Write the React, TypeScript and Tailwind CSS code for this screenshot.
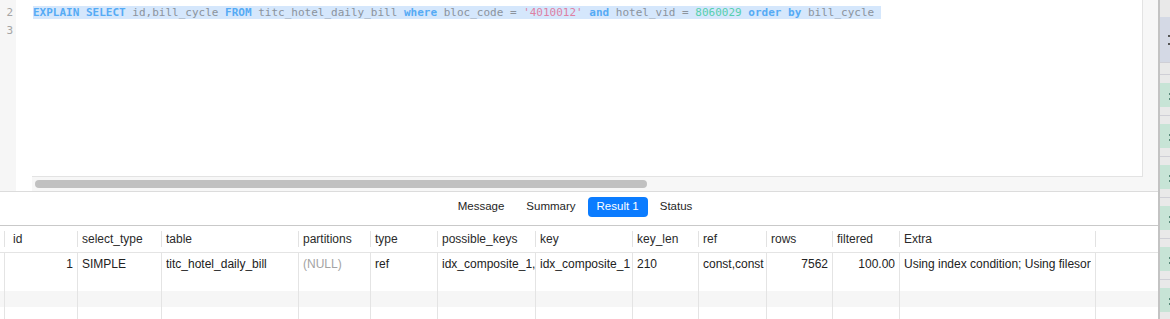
import React from 'react';

const MONO = { fontFamily: '"DejaVu Sans Mono", monospace' };

type Tok = { t: string; c: 'kw' | 'id' | 'str' | 'num' };

const sql: Tok[] = [
  { t: 'EXPLAIN', c: 'kw' },
  { t: ' ', c: 'id' },
  { t: 'SELECT', c: 'kw' },
  { t: ' id,bill_cycle ', c: 'id' },
  { t: 'FROM', c: 'kw' },
  { t: ' titc_hotel_daily_bill ', c: 'id' },
  { t: 'where', c: 'kw' },
  { t: ' bloc_code = ', c: 'id' },
  { t: "'4010012'", c: 'str' },
  { t: ' ', c: 'id' },
  { t: 'and', c: 'kw' },
  { t: ' hotel_vid = ', c: 'id' },
  { t: '8060029', c: 'num' },
  { t: ' ', c: 'id' },
  { t: 'order', c: 'kw' },
  { t: ' ', c: 'id' },
  { t: 'by', c: 'kw' },
  { t: ' bill_cycle ', c: 'id' },
];

const tokClass = {
  kw: 'text-[#55abf5] font-bold',
  id: 'text-[#8b939d]',
  str: 'text-[#de80a4]',
  num: 'text-[#56cfae]',
};

const columns: { name: string; right?: boolean }[] = [
  { name: 'id', right: true },
  { name: 'select_type' },
  { name: 'table' },
  { name: 'partitions' },
  { name: 'type' },
  { name: 'possible_keys' },
  { name: 'key' },
  { name: 'key_len' },
  { name: 'ref' },
  { name: 'rows', right: true },
  { name: 'filtered', right: true },
  { name: 'Extra' },
];

const row = [
  '1',
  'SIMPLE',
  'titc_hotel_daily_bill',
  '(NULL)',
  'ref',
  'idx_composite_1,idx_composite_2',
  'idx_composite_1',
  '210',
  'const,const',
  '7562',
  '100.00',
  'Using index condition; Using filesort',
];

const grid =
  'grid grid-cols-[4px_73px_84px_137px_72px_67px_98px_97px_66px_68px_66px_67px_196px_1fr]';

function Strip() {
  const blocks = [0, 1, 2, 3, 4, 5];
  return (
    <div className="w-[12px] shrink-0 border-l-2 border-[#c3c3c3] bg-[#e9e9e9] flex flex-col">
      <div className="h-[17px] shrink-0" />
      <div className="h-[45px] shrink-0 bg-[#d4d9e5] relative">
        <div className="absolute right-0 top-[18px] w-[2px] h-[2px] bg-[#555]" />
        <div className="absolute right-0 top-[26px] w-[2px] h-[2px] bg-[#555]" />
      </div>
      <div className="h-[12px] shrink-0 border-t border-[#cfcfd6]" />
      {blocks.map((b) => (
        <div key={b} className="h-[41px] shrink-0 border-t border-[#cfcfd6] flex flex-col">
          <div className="h-[8px] shrink-0" />
          <div className="h-[24px] shrink-0 bg-[#c7e4d6] relative">
            <div className="absolute right-0 top-[10px] w-[1px] h-[2px] bg-[#5a8a7a]" />
            <div className="absolute right-0 top-[15px] w-[1px] h-[2px] bg-[#5a8a7a]" />
          </div>
        </div>
      ))}
    </div>
  );
}

export default function App() {
  return (
    <div
      className="w-[1170px] h-[319px] overflow-hidden flex bg-white"
      style={{ fontFamily: '"Liberation Sans", Arial, sans-serif' }}
    >
      <div className="flex-1 flex flex-col min-w-0">
        {/* editor */}
        <div className="h-[192px] shrink-0 flex border-b border-[#dcdcdc]">
          <div className="w-[16px] bg-[#f6f6f6] pt-[4px] text-[11px] leading-[18px] text-[#a5a5a5] text-right pr-[3px]" style={MONO}>
            <div>2</div>
            <div>3</div>
          </div>
          <div className="flex-1 flex flex-col">
            <div className="flex-1 bg-white border-r border-[#e3e3e3] pl-[17px] pt-[4px] text-[11px] leading-[18px] whitespace-pre" style={MONO}>
              <div>
                <span className="bg-[#d5e7fc]">
                  {sql.map((s, i) => (
                    <span key={i} className={tokClass[s.c]}>
                      {s.t}
                    </span>
                  ))}
                </span>
              </div>
              <div>&nbsp;</div>
            </div>
            <div className="h-[15px] shrink-0 flex">
              <div className="w-[16px] bg-white" />
              <div className="flex-1 bg-[#f7f7f7] border-t border-[#e3e3e3] pl-[3px] pt-[3px]">
                <div className="w-[612px] h-[8px] rounded-full bg-[#c1c1c1]" />
              </div>
            </div>
          </div>
          <div className="w-[15px] bg-[#f7f7f7]" />
        </div>

        {/* tabs */}
        <div className="h-[34px] shrink-0 border-b border-[#c9c9c9] flex justify-center pt-[5px] pr-[8px] text-[11.5px] text-[#1e1e1e]">
          <div className="flex items-start gap-[2px]">
            <div className="h-[20px] px-[10px] flex items-center">Message</div>
            <div className="h-[20px] px-[10px] flex items-center">Summary</div>
            <div className="h-[20px] px-[9px] flex items-center rounded-[4px] bg-[#0b7cff] text-white">Result 1</div>
            <div className="h-[20px] px-[10px] flex items-center">Status</div>
          </div>
        </div>

        {/* table */}
        <div className="flex-1 text-[12px] text-[#222]">
          <div className={`${grid} h-[27px] border-b border-[#e4e4e4]`}>
            <div />
            {columns.map((c, i) => (
              <div key={c.name} className="flex items-center overflow-hidden">
                <div
                  className={`h-[16px] border-l border-[#e2e2e2] flex items-center whitespace-nowrap text-[#2a2a2a] ${
                    i === 0 ? 'pl-[8px]' : 'pl-[4px]'
                  }`}
                >
                  {c.name}
                </div>
              </div>
            ))}
            <div className="flex items-center">
              <div className="h-[16px] border-l border-[#e2e2e2]" />
            </div>
          </div>
          <div className={`${grid} h-[38px]`}>
            <div />
            {row.map((v, i) => (
              <div
                key={i}
                className={`border-l border-[#e4e4e4] pt-[3px] leading-[16px] ${
                  columns[i].right ? 'text-right pr-[4px]' : 'pl-[4px]'
                } ${i === 11 ? 'pr-[4px]' : ''} ${v === '(NULL)' ? 'text-[#a3a3a3]' : ''}`}
              >
                <div className="overflow-hidden whitespace-nowrap">{v}</div>
              </div>
            ))}
            <div className="border-l border-[#e4e4e4]" />
          </div>
          <div className={`${grid} h-[16px] bg-[#f6f6f6]`}>
            <div />
            {columns.map((c) => (
              <div key={c.name} className="border-l border-[#e4e4e4]" />
            ))}
            <div className="border-l border-[#e4e4e4]" />
          </div>
          <div className={`${grid} h-[20px]`}>
            <div />
            {columns.map((c) => (
              <div key={c.name} className="border-l border-[#e4e4e4]" />
            ))}
            <div className="border-l border-[#e4e4e4]" />
          </div>
        </div>
      </div>
      <Strip />
    </div>
  );
}
